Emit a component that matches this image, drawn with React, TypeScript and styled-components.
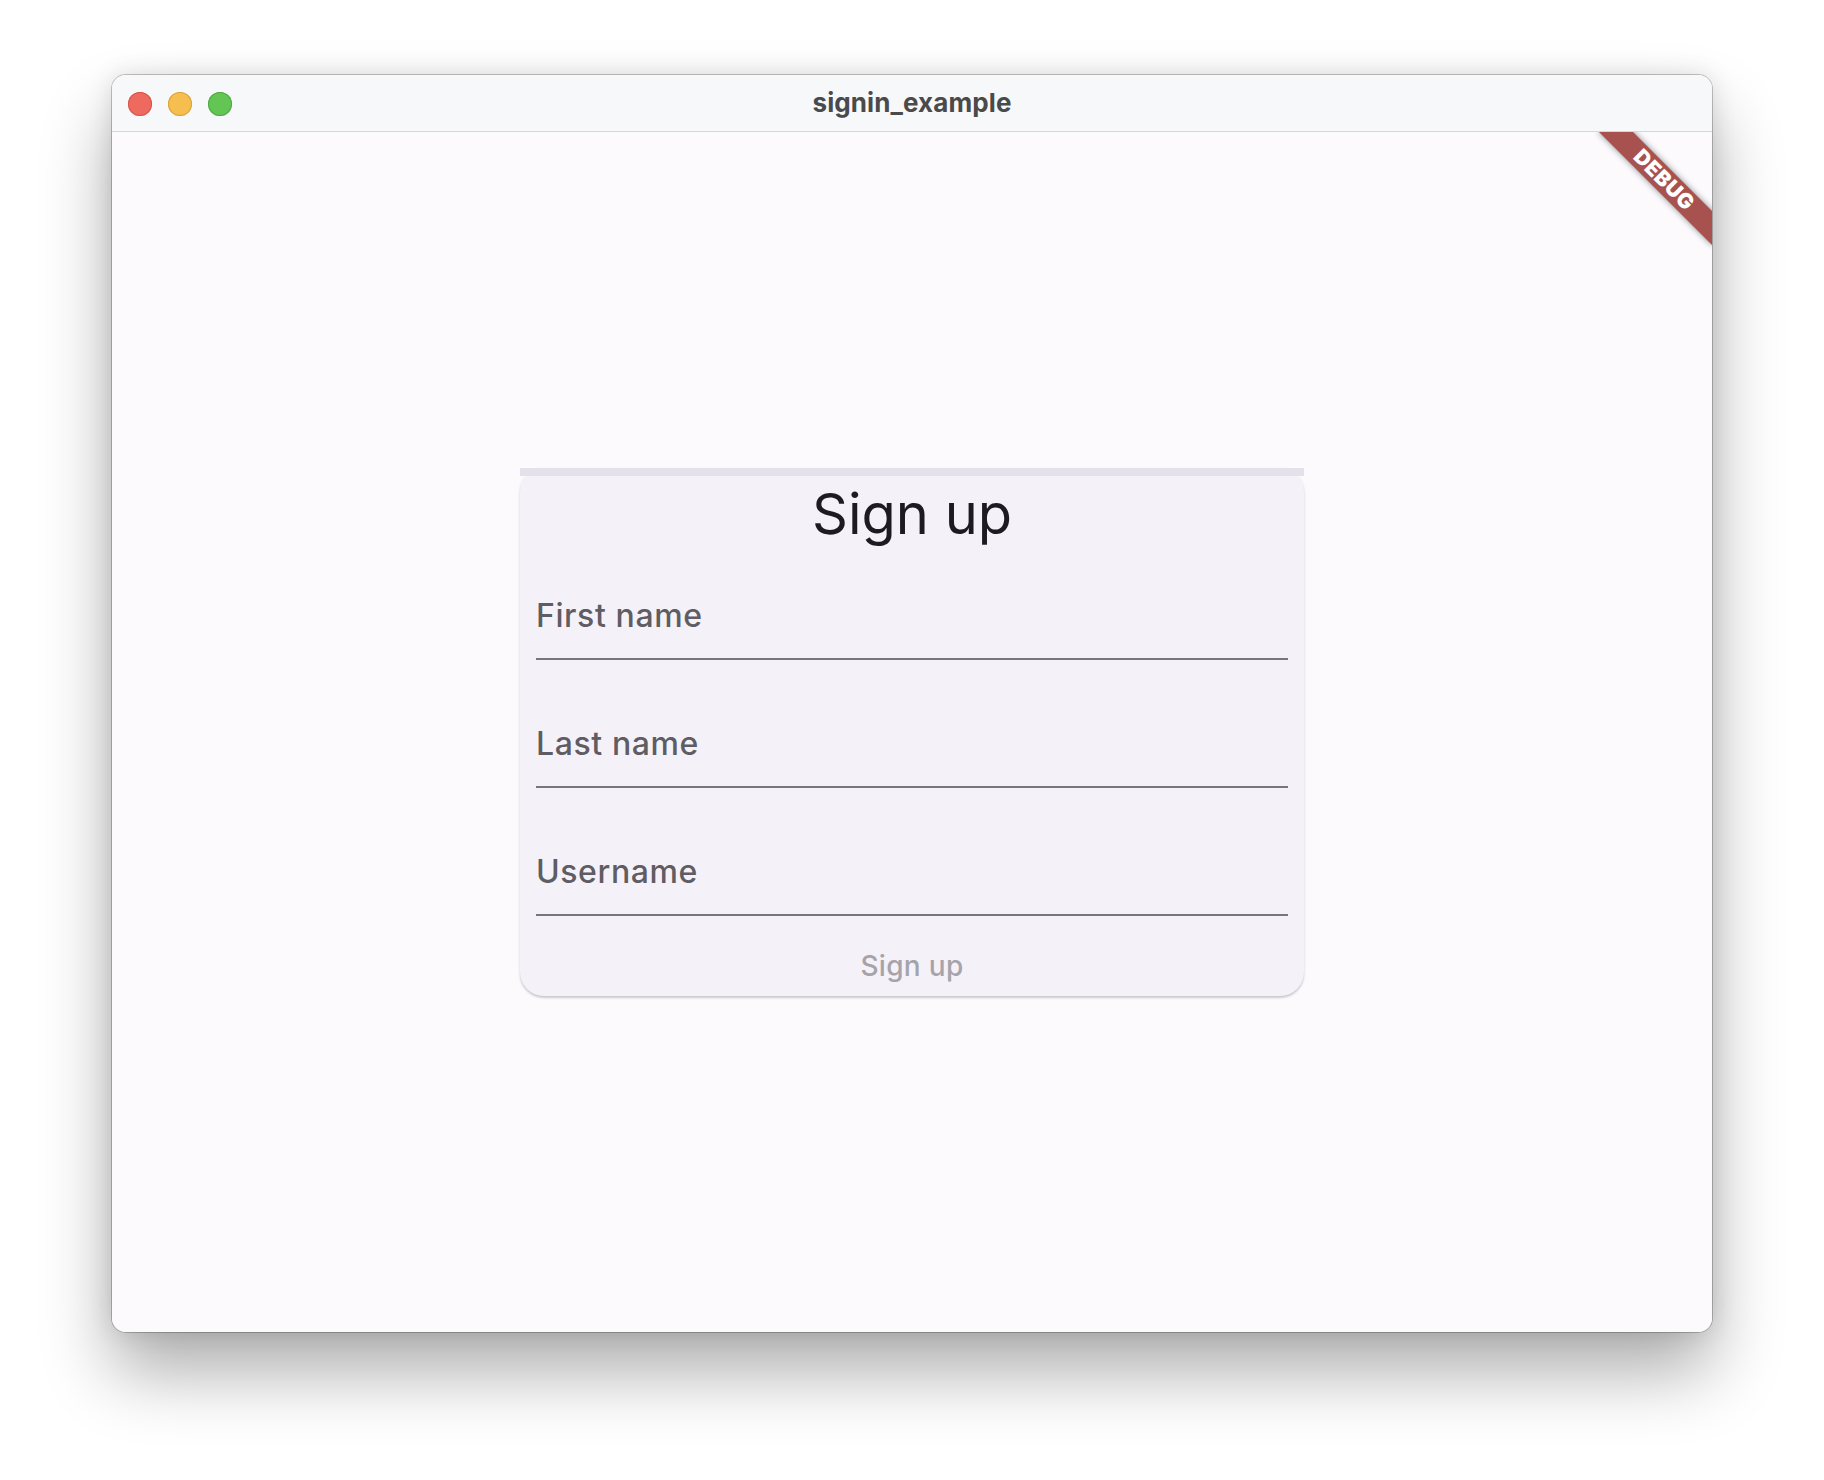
import React from "react";
import styled, { createGlobalStyle } from "styled-components";

const GlobalStyle = createGlobalStyle`
  html, body {
    margin: 0;
    padding: 0;
    background: #ffffff;
    font-family: Inter, "Noto Sans", "Liberation Sans", sans-serif;
  }
  * { box-sizing: border-box; }
`;

const Stage = styled.div`
  width: 1824px;
  height: 1480px;
  padding: 75px 112px 148px;
  background: #ffffff;
`;

const Window = styled.div`
  width: 1600px;
  height: 1257px;
  border-radius: 14px;
  display: flex;
  flex-direction: column;
  background: #fcfafd;
  box-shadow: 0 0 0 1px rgba(0, 0, 0, 0.22), 0 40px 70px rgba(0, 0, 0, 0.32),
    0 0 24px rgba(0, 0, 0, 0.12);
  overflow: hidden;
`;

const TitleBar = styled.div`
  height: 57px;
  flex: none;
  display: flex;
  align-items: center;
  position: relative;
  background: #f7f8f9;
  border-bottom: 1px solid #d7d7d9;
  padding-left: 16px;
`;

const Lights = styled.div`
  display: flex;
  gap: 16px;
  margin-top: 1px;
`;

const Light = styled.span<{ $fill: string; $edge: string }>`
  width: 24px;
  height: 24px;
  border-radius: 50%;
  background: ${(p) => p.$fill};
  box-shadow: inset 0 0 0 1px ${(p) => p.$edge};
`;

const WindowTitle = styled.div`
  flex: 1;
  text-align: center;
  margin-left: -104px;
  padding-right: 16px;
  font-size: 26px;
  font-weight: 700;
  color: #4a4a4b;
  letter-spacing: 0.1px;
  margin-top: -1px;
`;

const Content = styled.div`
  flex: 1;
  position: relative;
  overflow: hidden;
  display: flex;
  align-items: center;
  justify-content: center;
  background: #fcfafd;
`;

const BannerClip = styled.div`
  position: absolute;
  top: 0;
  right: 0;
  width: 140px;
  height: 140px;
  overflow: hidden;
  pointer-events: none;
`;

const Ribbon = styled.div`
  position: absolute;
  top: 36px;
  right: -32px;
  width: 160px;
  height: 24px;
  transform: rotate(45deg);
  background: #a8524f;
  box-shadow: 0 0 6px rgba(0, 0, 0, 0.45);
  color: #ffffff;
  font-size: 21px;
  font-weight: 900;
  line-height: 24px;
  text-align: center;
  letter-spacing: 0.6px;
`;

const Card = styled.div`
  width: 784px;
  background: #f4f2f8;
  border-radius: 24px;
  box-shadow: 0 2px 2px rgba(0, 0, 0, 0.16), 0 1px 4px rgba(0, 0, 0, 0.06);
  display: flex;
  flex-direction: column;
`;

const Progress = styled.div`
  height: 8px;
  background: #e5e1ea;
`;

const Heading = styled.div`
  height: 72px;
  line-height: 76px;
  text-align: center;
  font-size: 56px;
  font-weight: 400;
  color: #1d1b20;
`;

const FieldPad = styled.div`
  padding: 16px;
`;

const Field = styled.div`
  height: 96px;
  padding-top: 32px;
  border-bottom: 2px solid #79747e;
`;

const FieldLabel = styled.div`
  font-size: 32px;
  line-height: 40px;
  font-weight: 500;
  letter-spacing: 0.6px;
  color: #5f5c64;
`;

const ActionButton = styled.button`
  height: 64px;
  border: none;
  background: transparent;
  font-family: Inter, "Noto Sans", "Liberation Sans", sans-serif;
  font-size: 28px;
  font-weight: 500;
  letter-spacing: 0.3px;
  color: #a6a3aa;
  padding: 0;
  padding-top: 4px;
  cursor: default;
`;

const fields = ["First name", "Last name", "Username"];

export default function App() {
  return (
    <>
      <GlobalStyle />
      <Stage>
        <Window>
          <TitleBar>
            <Lights>
              <Light $fill="#ee6a5f" $edge="#d65449" />
              <Light $fill="#f5be4f" $edge="#d9a13d" />
              <Light $fill="#62c554" $edge="#4ea843" />
            </Lights>
            <WindowTitle>signin_example</WindowTitle>
          </TitleBar>
          <Content>
            <Card>
              <Progress />
              <Heading>Sign up</Heading>
              {fields.map((f) => (
                <FieldPad key={f}>
                  <Field>
                    <FieldLabel>{f}</FieldLabel>
                  </Field>
                </FieldPad>
              ))}
              <ActionButton disabled>Sign up</ActionButton>
            </Card>
            <BannerClip>
              <Ribbon>DEBUG</Ribbon>
            </BannerClip>
          </Content>
        </Window>
      </Stage>
    </>
  );
}
